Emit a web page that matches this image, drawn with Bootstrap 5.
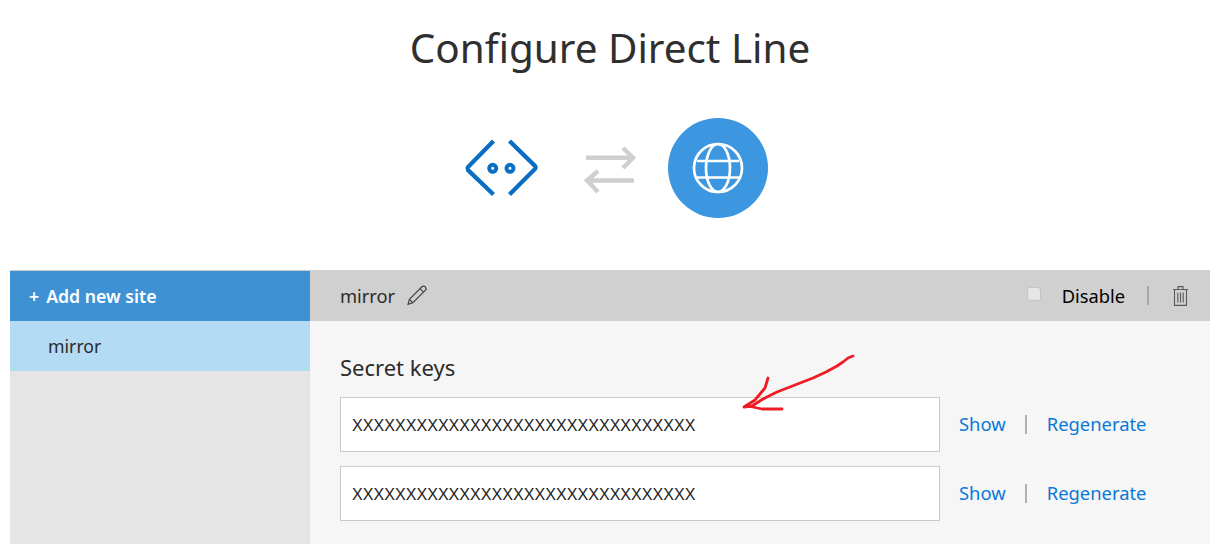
<!DOCTYPE html>
<html lang="en">
<head>
<meta charset="utf-8">
<title>Configure Direct Line</title>
<link href="https://cdn.jsdelivr.net/npm/bootstrap@5.3.0/dist/css/bootstrap.min.css" rel="stylesheet">
<style>
html,body{height:544px;overflow:hidden}
body{background:#fff;font-family:"Noto Sans","Open Sans",sans-serif;color:#2b2b2b;position:relative}
.pg-wrap{width:1200px;margin-left:10px}
.pg-title{font-family:"Noto Sans",sans-serif;font-size:40.4px;font-weight:400;line-height:56px;margin:0;padding-top:20px;height:76px;color:#2f2f2f;text-align:center}
.hero{height:194px;padding-top:42px;padding-left:446px}
.side{width:300px;flex:none;background:#e5e5e5;height:274px}
.add-site{height:51px;background:#3e92d4;border-top:1px solid #c8c8c8;color:#fff;font-weight:600;font-size:17.7px;padding-left:19px}
.plus-s{margin-right:7px}
.side-item{height:50px;background:#b3dbf3;font-size:17.7px;padding-left:38px;color:#2b2b2b}
.main-p{background:#f6f6f6;height:274px}
.head-b{height:51px;background:#d0d0d0;padding:0 22px 0 30px;font-size:18.3px}
.chk{width:14px;height:14px;border:1px solid #c4c4c4;border-radius:3px;background:#e6e6e6;margin:0 21px 4px 0;appearance:none;flex:none}
.sep{width:2px;height:19px;background:#a8a8a8;margin:0 24px 0 22px}
.pencil-i{margin:0 0 1px 10px}
.body-b{padding:32px 0 0 30px}
.sec-t{font-size:22px;font-weight:400;line-height:28px;margin:0 0 16px;color:#2b2b2b}
.key-i{width:600px;height:55px;border:1px solid #cacaca;background:#fff;border-radius:0;padding:2px 11px 0;font-family:"Liberation Sans",sans-serif;font-size:16.1px;color:#222;outline:0}
.key-r{margin-bottom:14px}
.acts{font-size:18.4px;margin:0 0 2px 19px}
.acts a{color:#0a78d7;text-decoration:none}
.acts i{display:block;width:2px;height:19px;background:#b0b0b0;margin:2px 20px 0 19px}
.ink{position:absolute;left:0;top:0;pointer-events:none}
</style>
</head>
<body>
<div class="pg-wrap">
<h1 class="pg-title">Configure Direct Line</h1>
<div class="hero d-flex align-items-start">
  <svg width="312" height="100" viewBox="456 118 312 100" fill="none">
    <g stroke="#0a6fc2" stroke-width="4.300" fill="none">
      <path d="M493.500 141 L468 167 Q467 168.500 468 170 L493.500 194.500"/>
      <path d="M509.500 141 L535 166 Q536 167.500 535 169 L509.500 194.500"/>
      <circle cx="492.700" cy="168.300" r="3.500" stroke-width="4"/>
      <circle cx="510" cy="168.300" r="3.500" stroke-width="4"/>
    </g>
    <g stroke="#cfcfcf" stroke-width="4.500" fill="none">
      <path d="M586 157.700 H633 M623 148 L633 157.700 L623 168"/>
      <path d="M634 180.500 H587 M598 171 L587 180.500 L598 192"/>
    </g>
    <circle cx="718" cy="168" r="50" fill="#3c97e0"/>
    <g stroke="#fff" stroke-width="2.700" fill="none">
      <circle cx="718" cy="168" r="24"/>
      <ellipse cx="718" cy="168" rx="12" ry="24"/>
      <path d="M697 161 H739 M697 177.500 H739"/>
    </g>
  </svg>
</div>
<div class="d-flex">
  <div class="side">
    <div class="add-site d-flex align-items-center"><span class="plus-s">+</span>Add new site</div>
    <div class="side-item d-flex align-items-center">mirror</div>
  </div>
  <div class="main-p flex-grow-1">
    <div class="head-b d-flex align-items-center">
      <span>mirror</span>
      <svg class="pencil-i" width="24" height="24" viewBox="0 0 22 22" fill="none" stroke="#444" stroke-width="1.100"><path d="M4 15 L15.500 3.500 Q17 2.300 18.500 3.500 Q20 5 18.800 6.500 L7.200 18 L2.800 19.500 Z M13.800 5.200 L17 8.400 M4 15 L7.200 18"/></svg>
      <input type="checkbox" class="chk ms-auto" aria-label="Disable">
      <span class="text-black">Disable</span>
      <span class="sep"></span>
      <svg width="15" height="20" viewBox="0 0 15 20" fill="none" stroke="#5a5a5a" stroke-width="1.100"><path d="M0 3.500 H15 M5 3.500 V.6 H10 V3.500 M1.500 3.500 V19.400 H13.500 V3.500 M4.800 6.500 V16.500 M7.500 6.500 V16.500 M10.200 6.500 V16.500"/></svg>
    </div>
    <div class="body-b">
      <h2 class="sec-t">Secret keys</h2>
      <div class="key-r d-flex align-items-center">
        <input class="key-i" readonly value="XXXXXXXXXXXXXXXXXXXXXXXXXXXXXXXX" aria-label="Secret key 1">
        <div class="acts d-flex align-items-center"><a href="#">Show</a><i></i><a href="#">Regenerate</a></div>
      </div>
      <div class="key-r d-flex align-items-center">
        <input class="key-i" readonly value="XXXXXXXXXXXXXXXXXXXXXXXXXXXXXXXX" aria-label="Secret key 2">
        <div class="acts d-flex align-items-center"><a href="#">Show</a><i></i><a href="#">Regenerate</a></div>
      </div>
    </div>
  </div>
</div>
</div>
<svg class="ink" width="1226" height="544" fill="none" stroke="#ee1c25" stroke-width="2.800" stroke-linecap="round" stroke-linejoin="round">
  <path d="M853 356 L848 358 L843 362 L837 366 L826 372 L813 378 L795 385 L777 392 L763 399 L752 406 L744 407 L755 400 L765 388 L768 378"/>
  <path d="M748 406 L762 409 L782 409"/>
</svg>
</body>
</html>
